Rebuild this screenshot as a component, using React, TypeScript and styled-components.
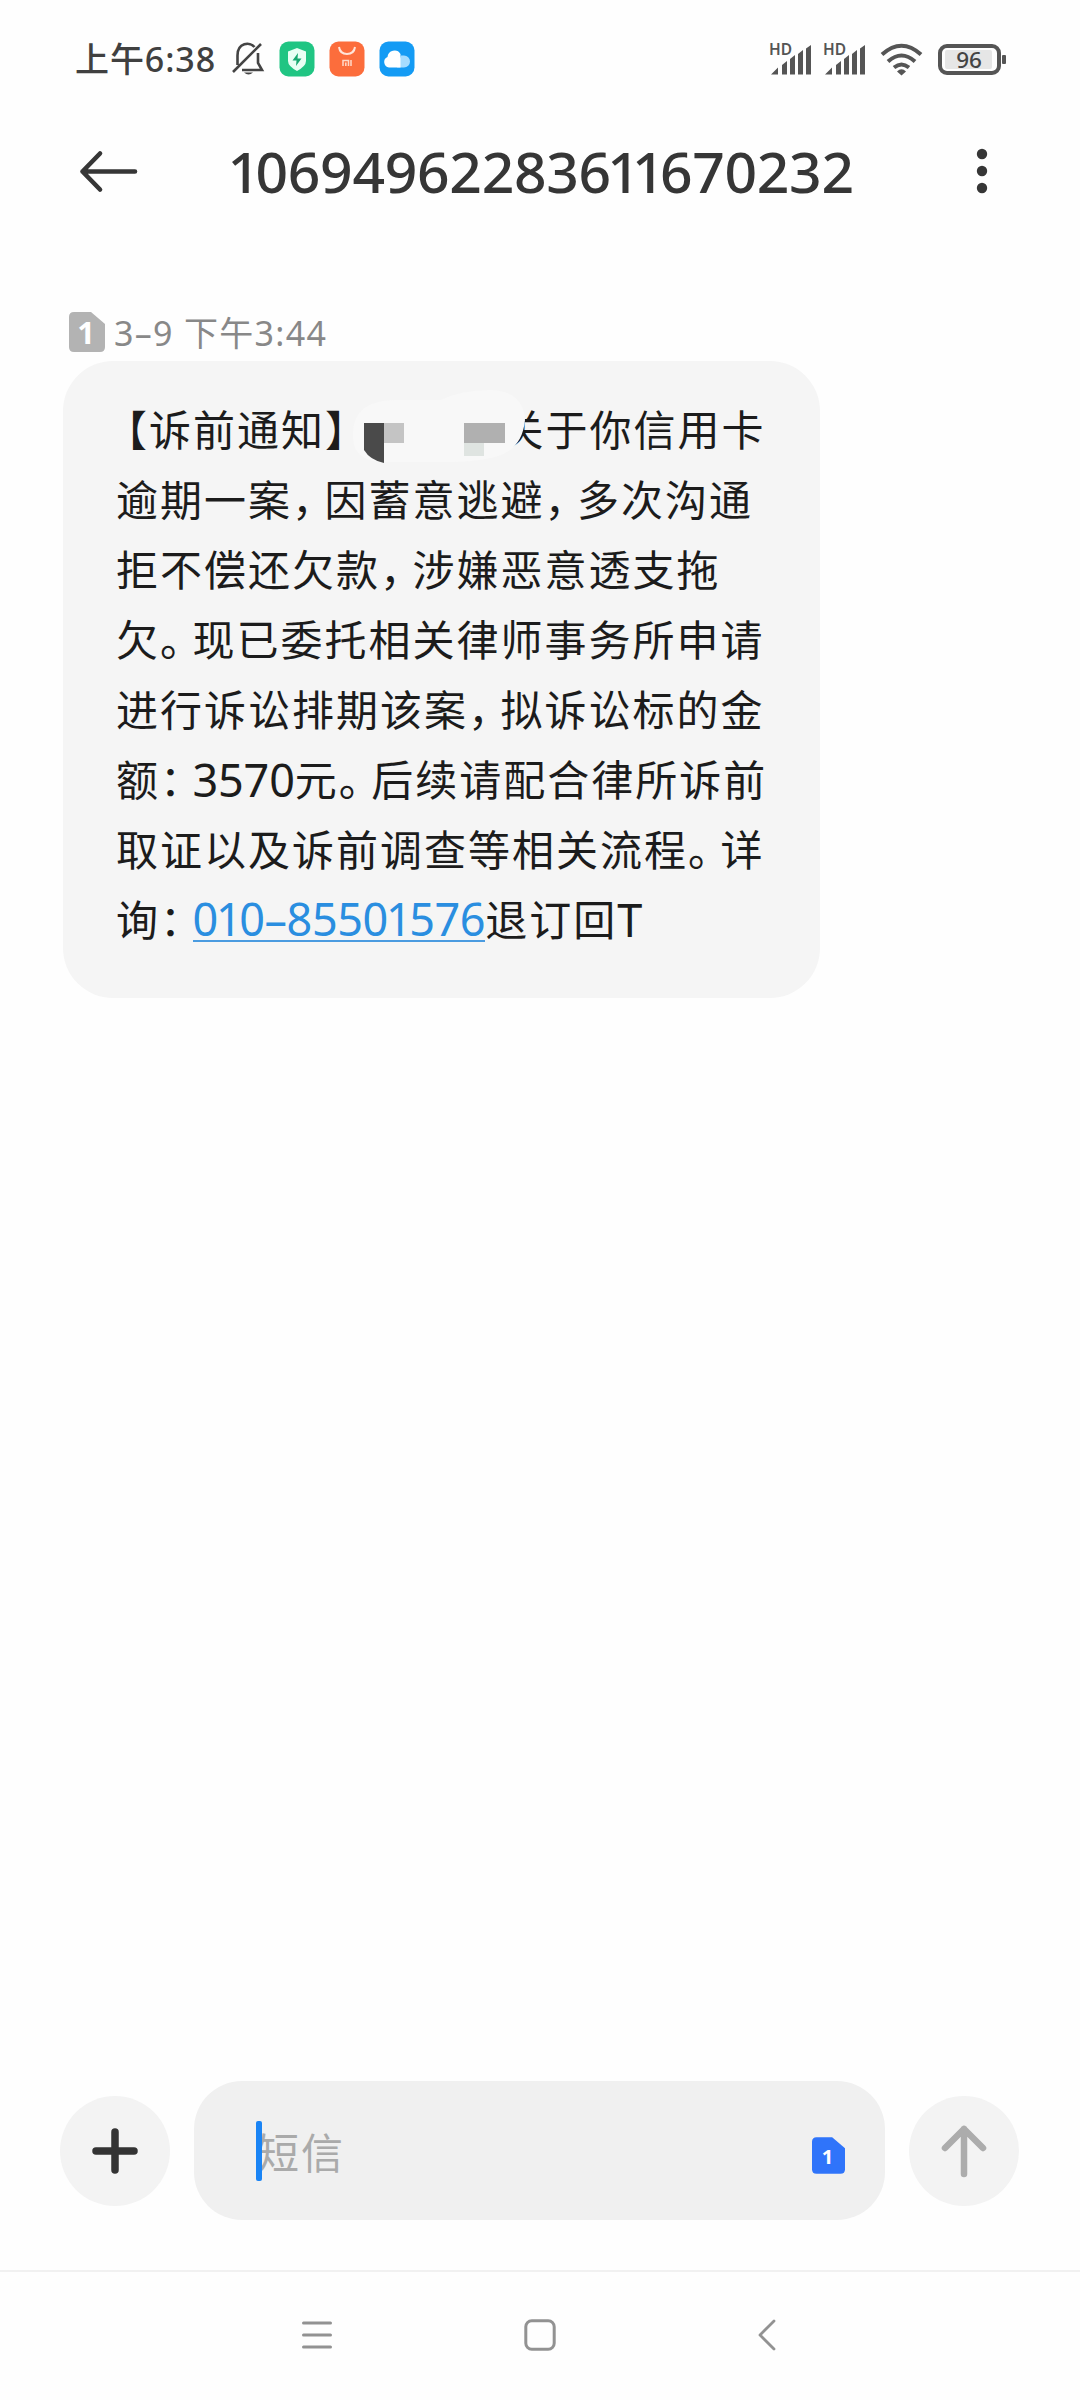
import React from 'react';
import styled, { createGlobalStyle } from 'styled-components';

const GlobalStyle = createGlobalStyle`
  * { box-sizing: border-box; }
  body { margin: 0; background: #fdfdfd; }
`;

const latin = '"Noto Sans", "Noto Sans CJK SC", sans-serif';

const Screen = styled.div`
  width: 1080px;
  height: 2400px;
  display: flex;
  flex-direction: column;
  background: #fefefe;
  font-family: ${latin};
  overflow: hidden;
  svg { display: block; flex: none; overflow: visible; }
`;

const StatusBar = styled.header`
  height: 100px;
  padding: 18px 74px 0 75px;
  display: flex;
  justify-content: space-between;
  align-items: flex-start;
`;

const StatusGroup = styled.div`
  height: 82px;
  display: flex;
  align-items: center;
`;

const Clock = styled.span<{ $w: number }>`
  width: ${(p) => p.$w}px;
  font-size: 34px;
  line-height: 40px;
  font-weight: 500;
  letter-spacing: 0.9px;
  color: #404040;
  white-space: nowrap;
`;

const IconSlot = styled.span<{ $w: number }>`
  width: ${(p) => p.$w}px;
  flex: none;
`;

const TitleBar = styled.div`
  height: 142px;
  padding: 0 92px 0 78px;
  display: flex;
  align-items: center;
`;

const Title = styled.h1`
  margin: 0;
  flex: 1;
  padding-left: 91px;
  font-size: 57px;
  line-height: 80px;
  font-weight: 500;
  color: #363636;
  white-space: nowrap;
`;

const Digit = styled.span<{ $shift: number; $gap: number }>`
  margin-left: ${(p) => p.$shift}px;
  letter-spacing: ${(p) => p.$gap}px;
`;

const Thread = styled.main`
  flex: 1;
  padding: 70px 0 0 63px;
`;

const Stamp = styled.div`
  height: 49px;
  padding-left: 6px;
  display: flex;
  align-items: flex-start;
  gap: 9px;
`;

const StampText = styled.time`
  font-size: 34px;
  line-height: 42px;
  letter-spacing: 1.3px;
  color: #888;
  white-space: pre;
`;

const Bubble = styled.article`
  width: 757px;
  height: 637px;
  border-radius: 50px;
  background: #f5f5f5;
  padding: 32px 0 0 53px;
`;

const Line = styled.div`
  height: 70px;
  display: flex;
  font-family: "Noto Sans CJK SC", sans-serif;
  font-size: 42px;
  line-height: 70px;
  letter-spacing: 2px;
  color: #1c1c1c;
  white-space: nowrap;
`;

const Punct = styled.span<{ $open?: boolean }>`
  letter-spacing: ${(p) => (p.$open ? 2 : -9.5)}px;
  margin-left: ${(p) => (p.$open ? -11 : 0)}px;
`;

const Numeral = styled.span`
  font-family: ${latin};
  font-size: 45px;
  line-height: 73px;
  letter-spacing: -0.2px;
`;

const Phone = styled.a`
  height: 59px;
  line-height: 72px;
  border-bottom: 2px solid #4a9be0;
  font-family: ${latin};
  font-size: 45px;
  color: #2a8ee0;
`;

const Redaction = styled.span`
  position: relative;
  width: 144px;
  height: 70px;
  flex: none;
  svg { position: absolute; left: -17px; top: -6px; z-index: 1; }
`;

const Composer = styled.footer`
  height: 189px;
  padding: 0 61px 0 60px;
  display: flex;
  align-items: flex-start;
  gap: 24px;
`;

const RoundButton = styled.button`
  width: 110px;
  height: 110px;
  margin: 15px 0 0;
  padding: 0;
  border: 0;
  border-radius: 50%;
  background: #f3f3f3;
  display: flex;
  align-items: center;
  justify-content: center;
`;

const Field = styled.div`
  flex: 1;
  height: 139px;
  border-radius: 48px;
  background: #f0f0f0;
  padding: 0 40px 0 62px;
  display: flex;
  align-items: center;
`;

const FieldSim = styled.span`
  padding-top: 9px;
`;

const Caret = styled.span`
  width: 6px;
  height: 60px;
  border-radius: 2px;
  background: #1a84f5;
  margin-right: -5px;
  z-index: 1;
`;

const Placeholder = styled.span`
  flex: 1;
  font-family: "Noto Sans CJK SC", sans-serif;
  font-size: 42px;
  line-height: 60px;
  letter-spacing: 2px;
  color: #aaa;
`;

const NavBar = styled.nav`
  height: 130px;
  border-top: 2px solid #f1f1f1;
  padding: 0 0 2px 301px;
  display: grid;
  grid-template-columns: 223px 234px 18px;
  align-items: center;
`;

function Digits({ text, before, after, gap }: { text: string; before: number; after: number; gap: number }) {
  return (
    <>
      {text.split(/(1)/).filter(Boolean).map((part, i) => (
        <Digit key={i} $shift={part === '1' ? before : 0} $gap={part === '1' ? after : gap}>
          {part}
        </Digit>
      ))}
    </>
  );
}

function MessageText({ text }: { text: string }) {
  return (
    <>
      {text.split(/([，。：【】]|\d+|T)/).filter(Boolean).map((part, i) => {
        if (/^[\dT]/.test(part)) return <Numeral key={i}>{part}</Numeral>;
        if (/[，。：【】]/.test(part)) return <Punct key={i} $open={part === '【'}>{part}</Punct>;
        return <span key={i}>{part}</span>;
      })}
    </>
  );
}

const Signal = () => (
  <svg width="44" height="34" viewBox="0 0 44 34">
    <text x="-1" y="13" fontSize="15.5" fontWeight="600" fontFamily="Noto Sans" fill="#555">HD</text>
    <path d="M1 32.500L8 25.500V32.500ZM12 32.500V23L17 19V32.500ZM20 32.500V17L25 13V32.500ZM28 32.500V12L33 8V32.500ZM36 32.500V6.500L41 3V32.500Z" fill="#555" />
  </svg>
);

const SimBadge = ({ w, h, fill, size }: { w: number; h: number; fill: string; size: number }) => (
  <svg width={w} height={h} viewBox="0 0 36 40">
    <path d="M5 0H22L36 12V35Q36 40 31 40H5Q0 40 0 35V5Q0 0 5 0Z" fill={fill} />
    <text x="17" y={21 + size * 0.37} textAnchor="middle" fontSize={size} fontWeight="700" fontFamily="Noto Sans" fill="#fff">1</text>
  </svg>
);

const lines = [
  '逾期一案，因蓄意逃避，多次沟通',
  '拒不偿还欠款，涉嫌恶意透支拖',
  '欠。现已委托相关律师事务所申请',
  '进行诉讼排期该案，拟诉讼标的金',
  '额：3570元。后续请配合律所诉前',
  '取证以及诉前调查等相关流程。详',
];

export default function App() {
  return (
    <Screen>
      <GlobalStyle />
      <StatusBar>
        <StatusGroup>
          <Clock $w={156}>上午6:38</Clock>
          <IconSlot $w={48}>
            <svg width="34" height="36" viewBox="0 0 34 36" fill="none" stroke="#444" strokeWidth="2.600">
              <path d="M2 31L30 3M6.500 24V14.500C6.500 1.500 19 .5 23.500 6M27 12V22L31 29H11" />
              <path d="M13 31.500Q17.500 35.500 22 31.500Z" fill="#444" stroke="none" />
            </svg>
          </IconSlot>
          <IconSlot $w={50}>
            <svg width="36" height="36" viewBox="0 0 36 36">
              <rect x=".5" y=".5" width="35" height="35" rx="9" fill="#20c583" />
              <path d="M18 7L27 10.500V20Q27 25 18 30Q9 25 9 20V10.500Z" fill="#e9fff4" />
              <path d="M19 12L13.500 19.500H17.500L17 25L22.500 17.500H18.500Z" fill="#18a870" />
            </svg>
          </IconSlot>
          <IconSlot $w={50}>
            <svg width="36" height="36" viewBox="0 0 36 36">
              <rect x=".5" y=".5" width="35" height="35" rx="9" fill="#fc6d3c" />
              <path d="M10 6Q11 13 18 13Q25 13 26 6" fill="none" stroke="#ffe4d8" strokeWidth="2" />
              <path d="M14 25V19.500H19.500V25M16.800 21.500V25M22 19V25" fill="none" stroke="#ffd9c8" strokeWidth="1.500" />
            </svg>
          </IconSlot>
          <svg width="36" height="36" viewBox="0 0 36 36">
            <rect x=".5" y=".5" width="35" height="35" rx="9" fill="#149bf4" />
            <path d="M22 14.500H25A6 6 0 0 1 25 26.500H18Z" fill="#a5dcff" />
            <path d="M10 26.500A5.500 5.500 0 0 1 8.500 16A7 7 0 0 1 21.500 13V26.500Z" fill="#fff" />
          </svg>
        </StatusGroup>
        <StatusGroup>
          <IconSlot $w={54}><Signal /></IconSlot>
          <IconSlot $w={56}><Signal /></IconSlot>
          <IconSlot $w={58}>
            <svg width="43" height="34" viewBox="0 0 43 34" fill="none" stroke="#555" strokeWidth="4">
              <path d="M2 12.500Q21.500-5 41 12.500M8 19.500Q21.500 7.500 35 19.500M14 25.500Q21.500 19.500 29 25.500" />
              <path d="M17 29.500Q21.500 25 26 29.500L21.500 33.500Z" fill="#555" stroke="none" />
            </svg>
          </IconSlot>
          <svg width="68" height="34" viewBox="0 0 68 34">
            <rect x="2" y="4" width="59" height="27" rx="7" fill="none" stroke="#555" strokeWidth="4" />
            <rect x="7" y="8" width="47" height="19" rx="2" fill="#e6e6e6" />
            <rect x="64" y="13" width="4" height="9" rx="1" fill="#555" />
            <text x="31" y="25.500" textAnchor="middle" fontSize="22.500" fontWeight="500" fontFamily="Noto Sans" fill="#444">96</text>
          </svg>
        </StatusGroup>
      </StatusBar>

      <TitleBar>
        <svg width="62" height="44" viewBox="0 0 62 44" fill="none" stroke="#363636" strokeWidth="4.600" strokeLinecap="round" strokeLinejoin="round">
          <path d="M57 22.500H4.500M22 4.500L4.500 22.500L22 40.500" />
        </svg>
        <Title><Digits text="10694962283611670232" before={-3.5} after={-4.6} gap={-0.3} /></Title>
        <svg width="12" height="46" viewBox="0 0 12 46" fill="#363636">
          <circle cx="6" cy="6" r="5.200" />
          <circle cx="6" cy="23" r="5.200" />
          <circle cx="6" cy="40" r="5.200" />
        </svg>
      </TitleBar>

      <Thread>
        <Stamp>
          <SimBadge w={36} h={40} fill="#b3b3b3" size={31} />
          <StampText>3–9 下午3:44</StampText>
        </Stamp>
        <Bubble>
          <Line>
            <MessageText text="【诉前通知】" />
            <Redaction>
              <svg width="190" height="90" viewBox="340 387 190 90">
                <path d="M352 438Q350 400 395 400H440Q460 390 490 390Q522 391 524 420Q521 452 490 458Q470 462 450 462H385Q353 462 352 438Z" fill="#f8f8f8" />
                <path d="M363 423H383V463Q369 460 363 450Z" fill="#4a4a4a" />
                <path d="M383 423H403V443H383Z" fill="#c4c4c4" />
                <path d="M463 423H504V443H463Z" fill="#b0b0b0" />
                <path d="M463 443H483V456H463Z" fill="#dfe4e1" />
              </svg>
            </Redaction>
            <MessageText text="关于你信用卡" />
          </Line>
          {lines.map((line) => (
            <Line key={line}><MessageText text={line} /></Line>
          ))}
          <Line>
            <MessageText text="询：" />
            <Phone><Digits text="010–85501576" before={-2} after={-2.5} gap={-0.4} /></Phone>
            <MessageText text="退订回T" />
          </Line>
        </Bubble>
      </Thread>

      <Composer>
        <RoundButton aria-label="添加">
          <svg width="48" height="48" viewBox="0 0 48 48" stroke="#333" strokeWidth="7.500" strokeLinecap="round">
            <path d="M24 5V43M5 24H43" />
          </svg>
        </RoundButton>
        <Field>
          <Caret />
          <Placeholder>短信</Placeholder>
          <FieldSim><SimBadge w={33} h={37} fill="#2f74fa" size={22} /></FieldSim>
        </Field>
        <RoundButton aria-label="发送">
          <svg width="48" height="56" viewBox="0 0 48 56" fill="none" stroke="#acacac" strokeWidth="6.500" strokeLinecap="round" strokeLinejoin="round">
            <path d="M24 51V6M5 25L24 6L43 25" />
          </svg>
        </RoundButton>
      </Composer>

      <NavBar>
        <svg width="32" height="30" viewBox="0 0 32 30" stroke="#929292" strokeWidth="3" strokeLinecap="round">
          <path d="M2.500 3H29.500M2.500 15H29.500M2.500 27H29.500" />
        </svg>
        <svg width="32" height="32" viewBox="0 0 32 32">
          <rect x="1.800" y="1.800" width="28.400" height="28.400" rx="6" fill="none" stroke="#929292" strokeWidth="3" />
        </svg>
        <svg width="18" height="32" viewBox="0 0 18 32" fill="none" stroke="#929292" strokeWidth="2.800" strokeLinecap="round" strokeLinejoin="round">
          <path d="M16 2L2 16L16 30" />
        </svg>
      </NavBar>
    </Screen>
  );
}
